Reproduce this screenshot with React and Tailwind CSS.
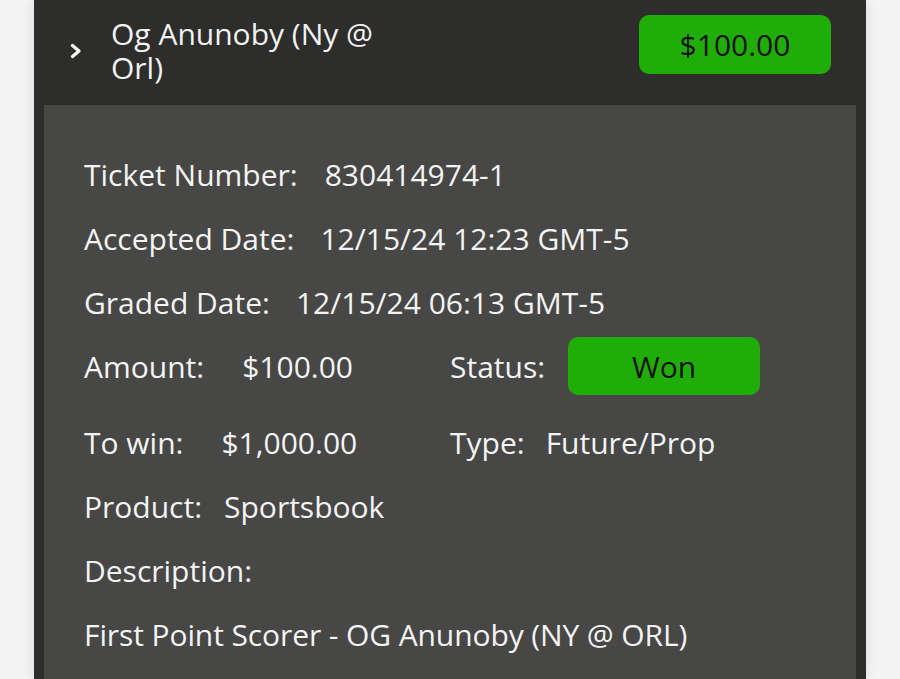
import React from "react";

const font = { fontFamily: '"Open Sans", "Noto Sans", sans-serif' };

function Row({ label, value, gap = "ml-[27px]" }) {
  return (
    <div className="flex">
      <span>{label}</span>
      <span className={gap}>{value}</span>
    </div>
  );
}

export default function App() {
  return (
    <div className="min-h-[679px] bg-[#f4f4f4] flex justify-center" style={font}>
      <div className="w-[832px] bg-[#2d2d2b] shadow-[0_0_12px_rgba(0,0,0,0.12)] px-[10px]">
        <div className="flex items-start justify-between h-[105px] pt-[15px] pl-[26px] pr-[25px]">
          <div className="flex items-center mt-[2px]">
            <svg width="12" height="16" viewBox="0 0 12 16">
              <polyline points="2.5,2.5 9,8 2.5,13.5" fill="none" stroke="#f2f2f2" strokeWidth="3.4" strokeLinecap="round" strokeLinejoin="round" />
            </svg>
            <div className="ml-[29px] max-w-[290px] text-[30px] leading-[34px] text-[#f2f2f2]">
              Og Anunoby (Ny @ Orl)
            </div>
          </div>
          <div className="w-[192px] h-[59px] rounded-[10px] bg-[#21ad07] flex items-center justify-center text-[30px] text-[#111]">
            $100.00
          </div>
        </div>
        <div className="bg-[#474746] min-h-[574px] pt-[53px] px-[40px] text-[30px] leading-[33px] text-[#f4f4f4]">
          <div className="flex flex-col gap-[31px]">
            <Row label="Ticket Number:" value="830414974-1" />
            <Row label="Accepted Date:" value="12/15/24 12:23 GMT-5" gap="ml-[26px]" />
            <Row label="Graded Date:" value="12/15/24 06:13 GMT-5" gap="ml-[26px]" />
            <div className="grid grid-cols-2 items-center -mt-[13px]">
              <Row label="Amount:" value="$100.00" gap="ml-[38px]" />
              <div className="flex items-center">
                <span>Status:</span>
                <span className="ml-[23px] w-[192px] h-[58px] rounded-[10px] bg-[#21ad07] flex items-center justify-center text-[#111]">
                  Won
                </span>
              </div>
            </div>
            <div className="grid grid-cols-2">
              <Row label="To win:" value="$1,000.00" gap="ml-[38px]" />
              <Row label="Type:" value="Future/Prop" gap="ml-[21px]" />
            </div>
            <Row label="Product:" value="Sportsbook" gap="ml-[22px]" />
            <div>Description:</div>
            <div className="tracking-[-0.1px]">First Point Scorer - OG Anunoby (NY @ ORL)</div>
          </div>
        </div>
      </div>
    </div>
  );
}
